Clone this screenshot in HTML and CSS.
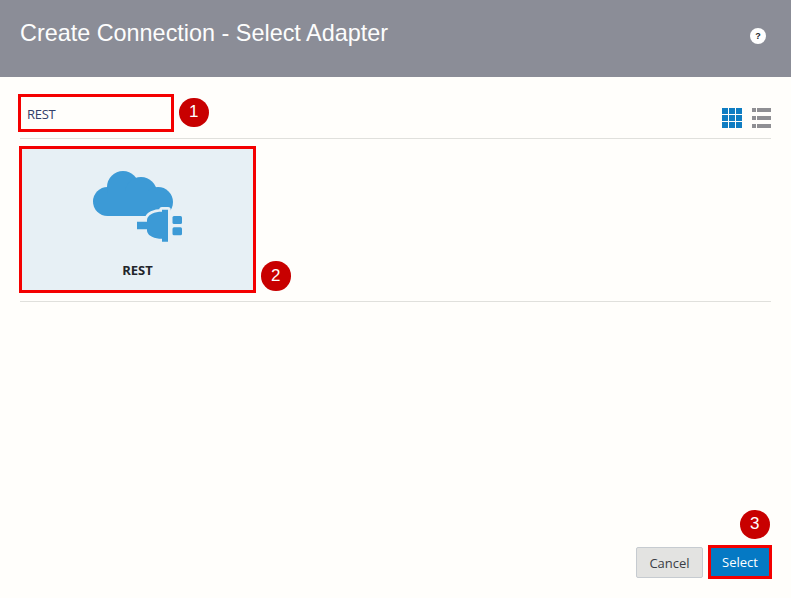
FILE: index.html
```html
<!DOCTYPE html>
<html lang="en">
<head>
<meta charset="utf-8">
<title>Create Connection - Select Adapter</title>
<link rel="stylesheet" href="styles.css">
</head>
<body>
<div class="page">
  <header class="header">
    <h1 class="title">Create Connection - Select Adapter</h1>
    <span class="help">?</span>
  </header>
  <main class="main">
    <div class="toolbar">
      <div class="search highlight">
        <span class="search-text">REST</span>
        <span class="badge badge-search">1</span>
      </div>
      <div class="views">
        <div class="grid-icon">
          <i></i><i></i><i></i><i></i><i></i><i></i><i></i><i></i><i></i>
        </div>
        <div class="list-icon">
          <div class="list-row"><i></i><b></b></div>
          <div class="list-row"><i></i><b></b></div>
          <div class="list-row"><i></i><b></b></div>
        </div>
      </div>
    </div>
    <section class="results">
      <div class="card highlight">
        <svg class="card-icon" width="105" height="80" viewBox="0 0 105 80" aria-hidden="true">
          <g class="cloud">
            <circle cx="22.500" cy="36.500" r="14.500"/>
            <circle cx="38" cy="22" r="16"/>
            <circle cx="56" cy="28" r="16"/>
            <circle cx="73" cy="37" r="15"/>
            <rect x="23" y="26" width="50" height="25"/>
          </g>
          <path class="plug-halo" d="M52 56.700h10v-1c0-4 3-6 5-7 3-1.500 6-2 10-2v-2h6v32h-6v-3c-4 0-7-.5-10-2-2-1-5-3-5-6.500v-1H52z"/>
          <path class="plug" d="M52 56.700h10v-1c0-4 3-6 5-7 3-1.500 6-2 10-2v-2h6v32h-6v-3c-4 0-7-.5-10-2-2-1-5-3-5-6.500v-1H52z"/>
          <rect class="plug" x="87.500" y="51" width="9.500" height="8" rx="1.500"/>
          <rect class="plug" x="87.500" y="62.300" width="9.500" height="8" rx="1.500"/>
        </svg>
        <span class="card-label">REST</span>
        <span class="badge badge-card">2</span>
      </div>
    </section>
    <footer class="footer">
      <button class="btn btn-cancel" type="button">Cancel</button>
      <button class="btn btn-select highlight" type="button">Select<span class="badge badge-select">3</span></button>
    </footer>
  </main>
</div>
</body>
</html>
```
FILE: styles.css
```css
* { box-sizing: border-box; }
html, body { margin: 0; padding: 0; }
body { background: #fffefb; font-family: "Open Sans", "Noto Sans", sans-serif; }
.page { width: 791px; height: 598px; display: flex; flex-direction: column; overflow: hidden; }
.header {
  height: 77px; flex: none; background: #8b8d97; color: #fff;
  display: flex; justify-content: space-between; align-items: flex-start;
  padding: 0 25px 0 20px;
}
.title {
  margin: 18px 0 0; font: 400 23.400px/30px "Liberation Sans", Arial, sans-serif; color: #fdfdfd;
}
.help {
  width: 16px; height: 16px; margin-top: 28px; border-radius: 50%; background: #fff; color: #22232a;
  display: flex; align-items: center; justify-content: center;
  font: 700 9px/16px "Liberation Sans", Arial, sans-serif;
}
.main { flex: 1; display: flex; flex-direction: column; padding: 0 20px 19px 19px; }
.highlight { border: 3px solid #f40000; position: relative; }
.toolbar {
  height: 62px; flex: none; display: flex; justify-content: space-between;
  border-bottom: 1px solid #e0e0dc; margin-left: 1px; padding-top: 17px; align-items: flex-start;
}
.search {
  width: 156px; height: 38px; margin-left: -2px; display: flex; align-items: center; padding: 2px 0 0 6px;
  background: #fffefb; font-size: 13px; color: #33406a;
}
.search-text { letter-spacing: -0.3px; }
.views { display: flex; gap: 10px; padding-top: 14px; }
.grid-icon { display: grid; grid-template-columns: repeat(3, 6px); grid-auto-rows: 6px; gap: 1px; }
.grid-icon i { background: #0f7dc2; }
.list-icon { width: 19px; display: flex; flex-direction: column; justify-content: space-between; height: 20px; }
.list-row { display: flex; gap: 1px; height: 4px; }
.list-row i { width: 4px; background: #8f8f93; }
.list-row b { flex: 1; background: #8f8f93; }
.results { height: 163px; flex: none; border-bottom: 1px solid #e0e0dc; margin-left: 1px; padding-top: 7px; }
.card {
  width: 237px; height: 147px; margin-left: -1px; background: #e7f0f5;
  display: flex; flex-direction: column; align-items: center;
}
.card-icon { margin-top: 16px; margin-right: 9px; flex: none; display: block; position: relative; left: 4px; }
.cloud, .plug { fill: #3c9ad6; }
.plug-halo { fill: #e7f0f5; stroke: #e7f0f5; stroke-width: 5.500px; stroke-linejoin: round; }
.card-label { margin-top: 17px; font-size: 13px; font-weight: 700; line-height: 16px; color: #23252b; }
.footer { margin-top: auto; display: flex; justify-content: flex-end; align-items: center; gap: 5px; margin-right: -1px; }
.btn { font-family: inherit; font-size: 13px; padding: 0; line-height: 16px; }
.btn-cancel {
  width: 67px; height: 31px; background: #e3e3e1; border: 1px solid #c6cbd0; border-radius: 2px; color: #3a3d45;
  padding-top: 1px;
}
.btn-select { width: 64px; height: 34px; background: #0579c4; color: #fff; }
.badge {
  position: absolute; width: 29.500px; height: 29.500px; border-radius: 50%; background: #c80000; color: #fff;
  display: flex; align-items: center; justify-content: center;
  font: 400 17px/30px "Liberation Sans", Arial, sans-serif;
}
.badge-search { left: 158px; top: 0.500px; }
.badge-card { left: 239px; top: 112px; }
.badge-select { left: 29px; top: -38.500px; }
```
